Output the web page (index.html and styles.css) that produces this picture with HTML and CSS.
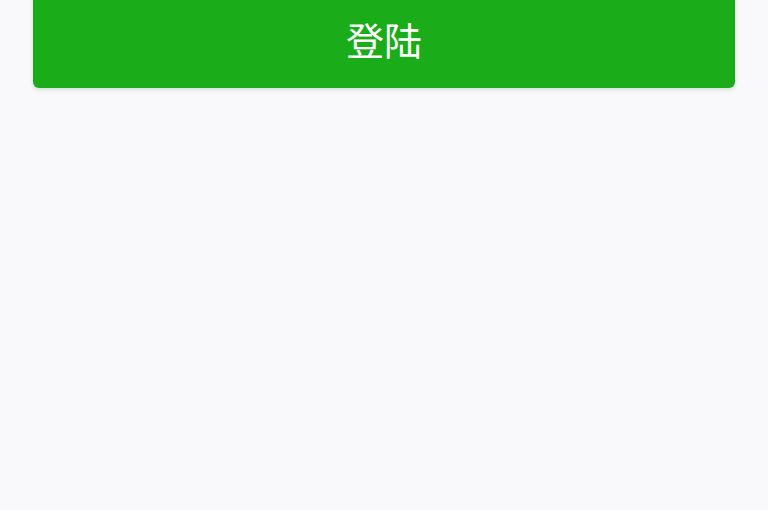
FILE: index.html
```html
<!DOCTYPE html>
<html lang="zh">
<head>
<meta charset="utf-8">
<link rel="stylesheet" href="styles.css">
</head>
<body>
<div class="page">
  <button class="login-btn">登陆</button>
</div>
</body>
</html>
```
FILE: styles.css
```css
html, body {
  margin: 0;
  padding: 0;
  background: #f9f9fb;
  height: 100%;
  overflow: hidden;
}
.page {
  padding: 0 33px;
  font-family: "Noto Sans CJK SC", "Noto Sans", sans-serif;
}
.login-btn {
  display: block;
  width: 100%;
  height: 98px;
  margin-top: -10px;
  border: none;
  border-radius: 6px;
  background: #1aad19;
  color: #ffffff;
  font-family: "Noto Sans CJK SC", "Noto Sans", sans-serif;
  font-size: 38px;
  line-height: 98px;
  padding: 0;
  box-shadow: 0 2px 4px rgba(0, 80, 0, 0.15);
}
```
